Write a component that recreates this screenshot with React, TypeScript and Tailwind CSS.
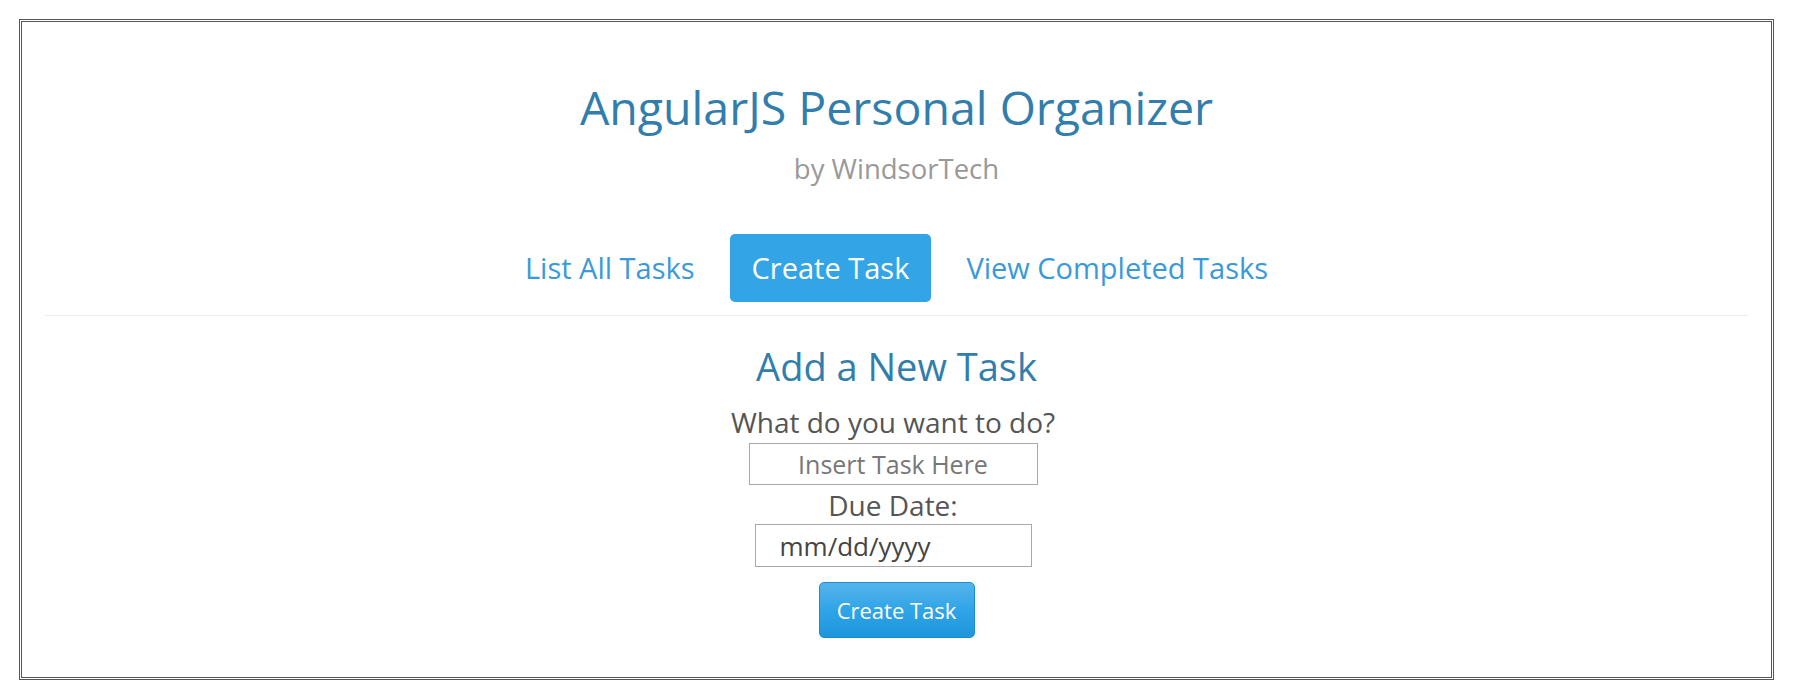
import React from 'react';

const NavLink: React.FC<{ label: string; active?: boolean }> = ({ label, active }) => (
  <a
    href="#"
    className={
      active
        ? 'flex h-[68px] items-center rounded-[5px] bg-[#33a5e6] px-[22px] leading-[40px] text-white'
        : 'flex h-[68px] items-center leading-[40px] text-[#3a9ad9]'
    }
  >
    {label}
  </a>
);

export default function App() {
  return (
    <div className="min-h-screen bg-white pt-[19px] pl-[19px] pr-[21px] font-['Open_Sans',sans-serif]">
      <div className="h-[661px] border-[3px] border-double border-[#555] px-[23px] pt-[59px] text-center">
        <h1 className="text-[46.5px] leading-[52px] text-[#317eac]">AngularJS Personal Organizer</h1>
        <p className="mt-[20px] text-[27.5px] leading-[32px] text-[#999]">by WindsorTech</p>

        <nav className="mt-[49px] flex justify-center gap-[35px] text-[29px]">
          <NavLink label="List All Tasks" />
          <NavLink label="Create Task" active />
          <NavLink label="View Completed Tasks" />
        </nav>

        <hr className="mt-[13px] border-t border-[#eee]" />

        <form className="flex flex-col items-center" onSubmit={e => e.preventDefault()}>
          <h2 className="mt-[28px] text-[38px] leading-[44px] text-[#317eac]">Add a New Task</h2>

          <div className="flex flex-col items-center pr-[7px]">
            <label className="mt-[18px] text-[28px] leading-[32px] text-[#555]">What do you want to do?</label>
            <input
              type="text"
              placeholder="Insert Task Here"
              className="mt-[5px] h-[42px] w-[289px] border border-[#a9a9a9] text-center text-[25px] text-[#555] outline-none placeholder:text-[#777]"
            />

            <label className="mt-[4px] text-[28px] leading-[32px] text-[#555]">Due Date:</label>
            <input
              type="text"
              placeholder="mm/dd/yyyy"
              className="mt-[3px] h-[43px] w-[277px] border border-[#a9a9a9] pl-[24px] text-[26px] text-[#444] outline-none placeholder:text-[#444]"
            />
          </div>

          <button
            type="submit"
            className="mt-[15px] h-[56px] w-[156px] rounded-[5px] border border-[#1b8ed3] bg-gradient-to-b from-[#54b4eb] via-[#2fa4e7] to-[#1e96dc] text-[22px] text-white"
          >
            Create Task
          </button>
        </form>
      </div>
    </div>
  );
}
